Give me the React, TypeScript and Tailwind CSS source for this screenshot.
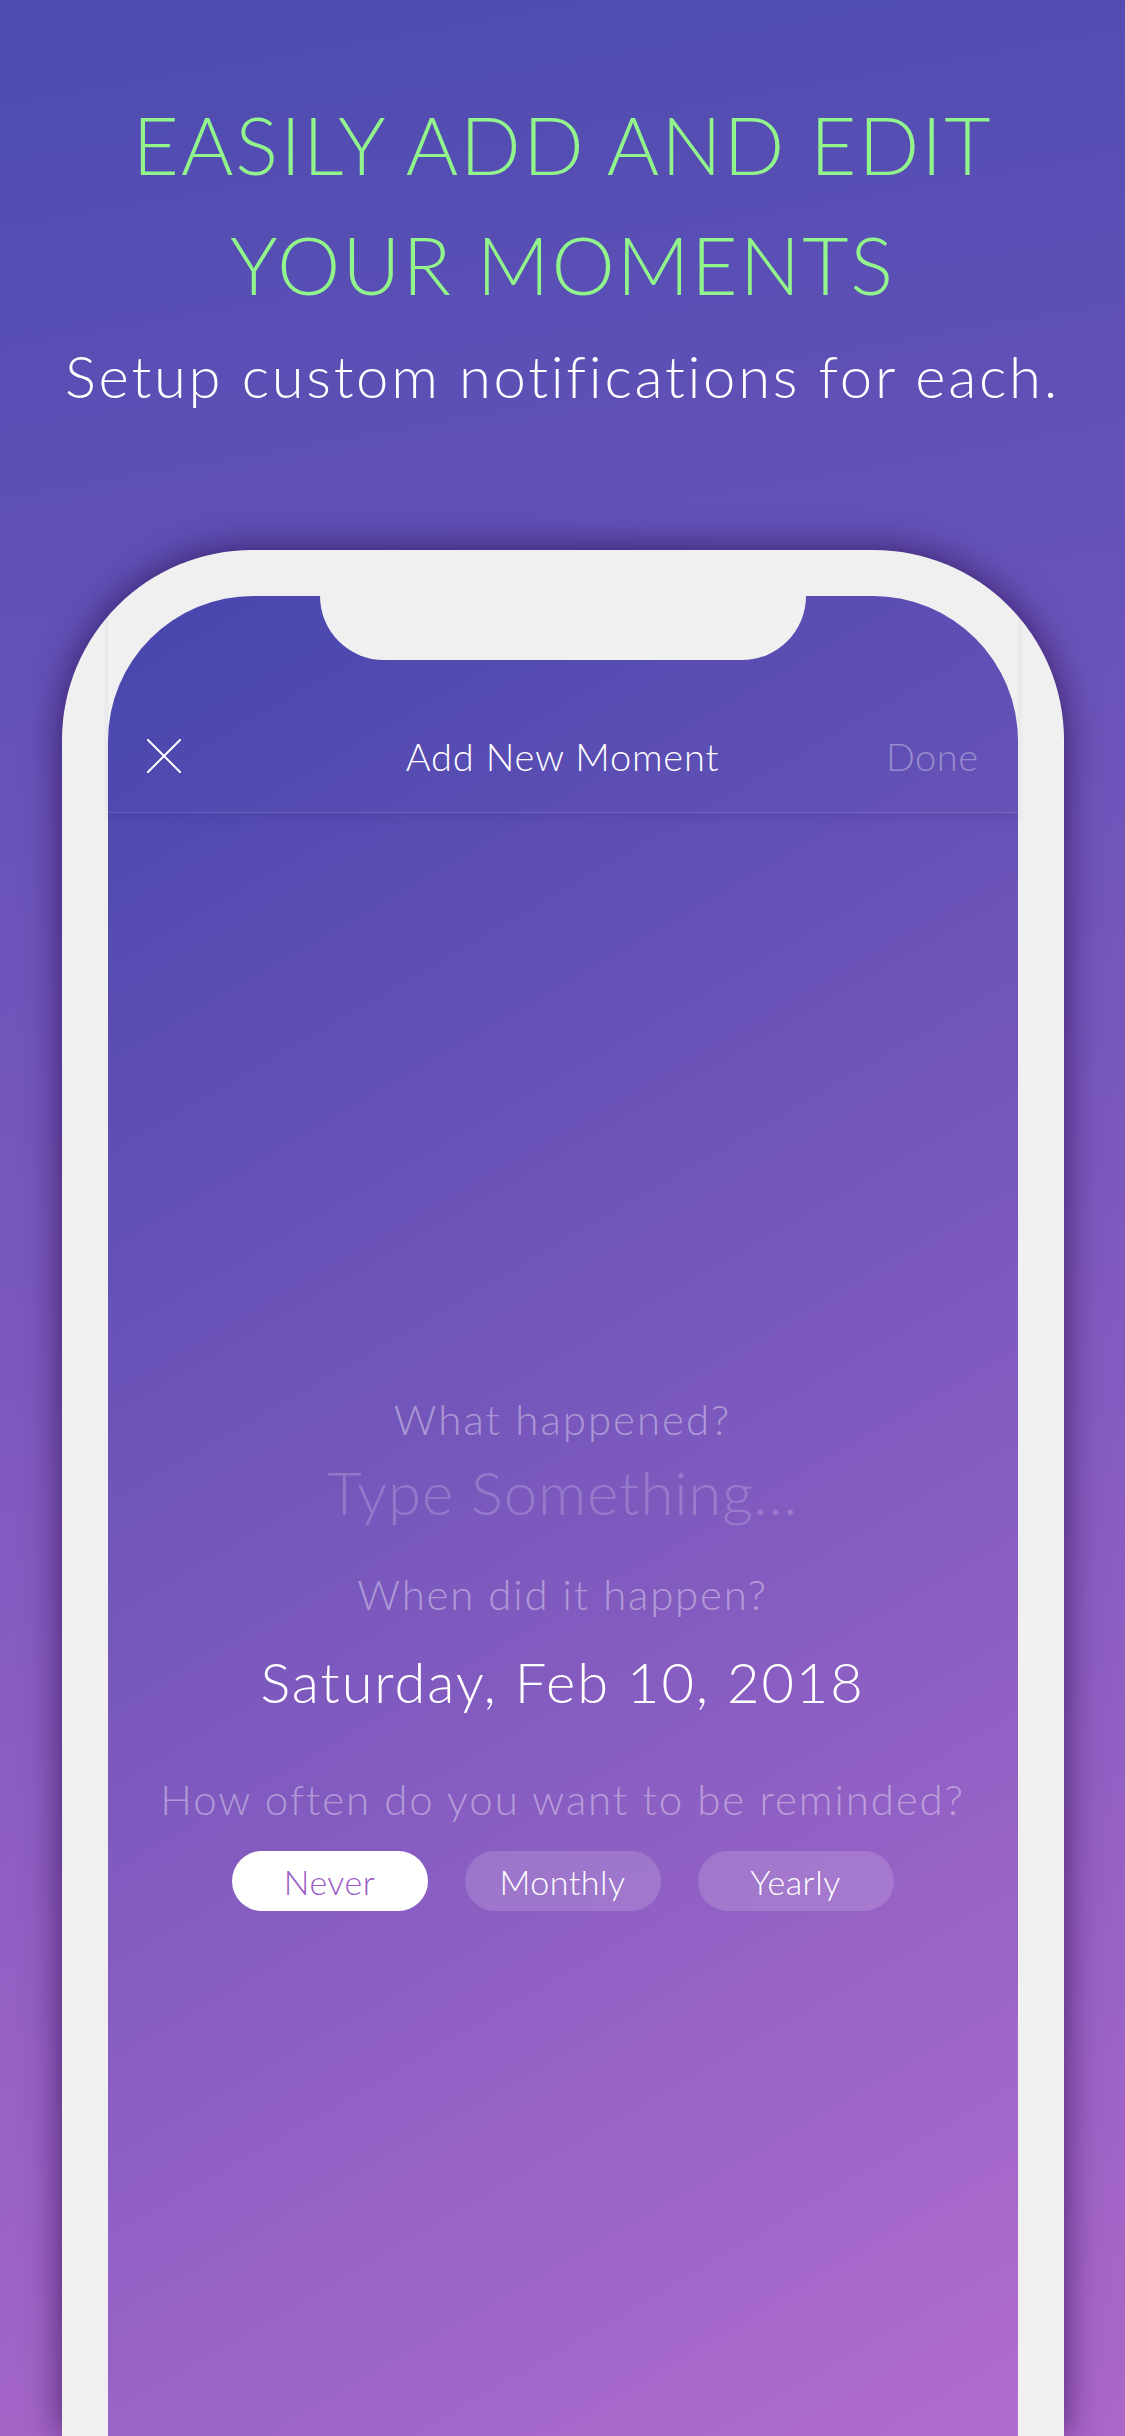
const font = { fontFamily: 'Lato, "Noto Sans", sans-serif' };

const App = () => {
  return (
    <div
      className="w-[1125px] h-[2436px] overflow-hidden bg-[linear-gradient(170deg,#4c4bb0,#7a58be_50%,#ab67ca)] flex flex-col items-center font-light"
      style={font}
    >
      {/* headline */}
      <div className="pt-[84px] text-center">
        <h1 className="text-[80px] leading-[120px] font-light text-[#92f58c] tracking-[2px]">
          EASILY ADD AND EDIT
          <br />
          YOUR MOMENTS
        </h1>
        <p className="mt-[17px] text-[58px] leading-[70px] font-light text-white tracking-[2.7px]">
          Setup custom notifications for each.
        </p>
      </div>

      {/* phone */}
      <div className="mt-[139px] w-[1002px] flex-1 bg-[#f0f0f0] rounded-t-[190px] pt-[46px] px-[46px] shadow-[0_0_36px_rgba(35,5,65,0.7)]">
        <div className="relative h-full rounded-t-[145px] bg-[linear-gradient(150deg,#4646ac,#b26ccf)] flex flex-col">
          {/* notch */}
          <div className="absolute top-0 left-1/2 -translate-x-1/2 w-[486px] h-[64px] bg-[#f0f0f0] rounded-b-[64px]" />

          {/* nav bar */}
          <div className="h-[217px] pt-[130px] border-b border-white/10 shadow-[0_6px_8px_rgba(40,20,100,0.08)]">
            <div className="h-[60px] px-[39px] grid grid-cols-[1fr_auto_1fr] items-center">
              <svg width="34" height="34" viewBox="0 0 34 34" className="text-white">
                <path d="M1 1 L33 33 M33 1 L1 33" stroke="currentColor" strokeWidth="2" strokeLinecap="round" />
              </svg>
              <span className="text-[38px] text-white tracking-[0.8px]">Add New Moment</span>
              <span className="justify-self-end text-[38px] text-white/35 tracking-[0.5px]">Done</span>
            </div>
          </div>

          {/* form */}
          <div className="pt-[585px] flex flex-col items-center text-center">
            <div className="text-[42px] leading-none text-white/40 tracking-[2px]">What happened?</div>
            <div className="mt-[22px] text-[60px] leading-none text-white/20 tracking-[0.8px]">Type Something...</div>
            <div className="mt-[51px] text-[42px] leading-none text-white/40 tracking-[1.8px]">When did it happen?</div>
            <div className="mt-[39px] text-[56px] leading-none text-white tracking-[1.9px]">Saturday, Feb 10, 2018</div>
            <div className="mt-[68px] text-[42px] leading-none text-white/40 tracking-[1.9px]">
              How often do you want to be reminded?
            </div>
            <div className="mt-[31px] flex gap-[37px]">
              <button className="w-[196px] h-[60px] rounded-full bg-white text-[34px] text-[#9a5cc6] font-light tracking-[0.5px]">
                Never
              </button>
              <button className="w-[196px] h-[60px] rounded-full bg-white/15 text-[34px] text-white font-light tracking-[0.5px]">
                Monthly
              </button>
              <button className="w-[196px] h-[60px] rounded-full bg-white/15 text-[34px] text-white font-light tracking-[0.5px]">
                Yearly
              </button>
            </div>
          </div>
        </div>
      </div>
    </div>
  );
};

export default App;
